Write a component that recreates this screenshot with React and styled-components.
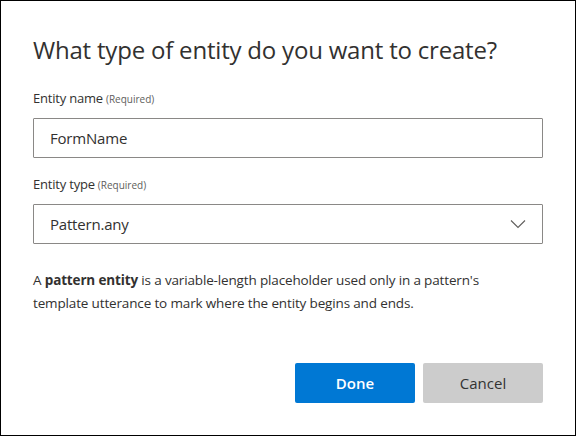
import React from "react";
import styled, { createGlobalStyle } from "styled-components";

const Global = createGlobalStyle`
  html, body { margin: 0; padding: 0; background: #fff; }
  * { box-sizing: border-box; }
`;

const font = `"Open Sans", "Noto Sans", sans-serif`;

const Dialog = styled.div`
  width: 576px;
  height: 436px;
  border: 1px solid #000;
  background: #fff;
  padding: 33px 32px 32px 32px;
  display: flex;
  flex-direction: column;
  font-family: ${font};
  color: #323130;
`;

const Title = styled.h1`
  margin: 0;
  font-size: 24px;
  line-height: 32px;
  letter-spacing: -0.2px;
  font-weight: 400;
  color: #323130;
`;

const Fields = styled.div`
  margin-top: 22px;
  display: flex;
  flex-direction: column;
  gap: 16px;
`;

const Field = styled.div`
  display: flex;
  flex-direction: column;
  gap: 9px;
`;

const Label = styled.label`
  font-size: 13px;
  line-height: 20px;
  letter-spacing: -0.2px;
  color: #323130;
`;

const Req = styled.span`
  font-size: 10px;
  letter-spacing: 0;
  margin-left: 3px;
  color: #605e5c;
`;

const Box = styled.div`
  height: 40px;
  border: 1px solid #8a8886;
  border-radius: 1px;
  display: flex;
  align-items: center;
  justify-content: space-between;
  padding: 0 16px 0 16px;
  font-size: 15px;
  letter-spacing: -0.2px;
  color: #323130;
`;

const Chevron = styled.svg`
  width: 16px;
  height: 10px;
  display: block;
`;

const Description = styled.p`
  margin: 25px 0 0 0;
  max-width: 455px;
  font-size: 13.5px;
  line-height: 23px;
  letter-spacing: -0.15px;
  color: #323130;
  b { font-weight: 700; }
`;

const Footer = styled.div`
  margin-top: auto;
  display: flex;
  justify-content: flex-end;
  gap: 8px;
`;

const Button = styled.button`
  width: 120px;
  height: 40px;
  border: none;
  border-radius: 2px;
  font-family: ${font};
  font-size: 15px;
  font-weight: ${(p) => (p.$primary ? 600 : 400)};
  background: ${(p) => (p.$primary ? "#0078d4" : "#cccccc")};
  color: ${(p) => (p.$primary ? "#ffffff" : "#333333")};
  cursor: pointer;
`;

export default function App() {
  return (
    <>
      <Global />
      <Dialog>
        <Title>What type of entity do you want to create?</Title>
        <Fields>
          <Field>
            <Label>
              Entity name<Req>(Required)</Req>
            </Label>
            <Box>FormName</Box>
          </Field>
          <Field>
            <Label>
              Entity type<Req>(Required)</Req>
            </Label>
            <Box>
              <span>Pattern.any</span>
              <Chevron viewBox="0 0 16 10">
                <path d="M1 1.5 L8 8.5 L15 1.5" fill="none" stroke="#605e5c" strokeWidth="1.1" />
              </Chevron>
            </Box>
          </Field>
        </Fields>
        <Description>
          A <b>pattern entity</b> is a variable-length placeholder used only in a pattern's
          template utterance to mark where the entity begins and ends.
        </Description>
        <Footer>
          <Button $primary>Done</Button>
          <Button>Cancel</Button>
        </Footer>
      </Dialog>
    </>
  );
}
